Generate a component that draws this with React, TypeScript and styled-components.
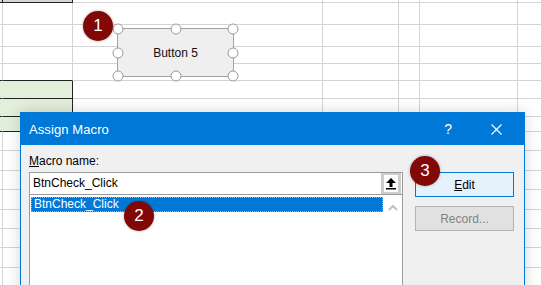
import React from "react";
import styled, { createGlobalStyle, css } from "styled-components";

const GlobalStyle = createGlobalStyle`
  html, body {
    margin: 0;
    padding: 0;
    background: #ffffff;
  }
  body {
    font-family: "Liberation Sans", Arial, sans-serif;
    overflow: hidden;
  }
`;

// sheet layout, taken from the row/column lines in the screenshot
const COLS = [3, 70, 250, 76, 21, 98, 24];
const ROWS = [3, 22, 22, 17, 17, 18, 18, 15, 19, 20, 19, 20, 19, 19, 20, 20];
const GREEN_ROWS = [5, 6, 7];

type CellKind = "plain" | "green" | "greenEdge" | "head" | "aboveGreen";

const cellKind = (row: number, col: number): CellKind => {
  if (row === 0 && col < 2) return "head";
  if (row === GREEN_ROWS[0] - 1 && col < 2) return "aboveGreen";
  if (GREEN_ROWS.includes(row) && col === 0) return "greenEdge";
  if (GREEN_ROWS.includes(row) && col === 1) return "green";
  return "plain";
};

//******** Components ********//

const Badge = ({ n, x, y }: { n: number; x: number; y: number }) => (
  <SBadge $x={x} $y={y}>
    {n}
  </SBadge>
);

const ButtonShape = () => (
  <ShapeBox>
    Button 5
    {[
      [0, 0],
      [50, 0],
      [100, 0],
      [0, 50],
      [100, 50],
      [0, 100],
      [50, 100],
      [100, 100],
    ].map(([hx, hy]) => (
      <Handle key={`${hx}-${hy}`} $x={hx} $y={hy} />
    ))}
  </ShapeBox>
);

const UploadIcon = () => (
  <svg width="12" height="13" viewBox="0 0 12 13">
    <path d="M6 1 L11 6 L7.5 6 L7.5 10 L4.5 10 L4.5 6 L1 6 Z" fill="#000" />
    <rect x="1" y="11" width="10" height="1.5" fill="#000" />
  </svg>
);

const ChevronUp = () => (
  <svg width="10" height="7" viewBox="0 0 10 7">
    <path d="M1 6 L5 2 L9 6" fill="none" stroke="#c2c2c2" strokeWidth="2" />
  </svg>
);

const CloseIcon = () => (
  <svg width="11" height="11" viewBox="0 0 11 11">
    <path d="M0.5 0.5 L10.5 10.5 M10.5 0.5 L0.5 10.5" stroke="#fff" strokeWidth="1.1" />
  </svg>
);

const AssignMacroDialog = () => (
  <Dialog>
    <TitleBar>
      <Title>Assign Macro</Title>
      <TitleButtons>
        <HelpMark>?</HelpMark>
        <CloseIcon />
      </TitleButtons>
    </TitleBar>
    <DialogBody>
      <MainColumn>
        <Label>
          <u>M</u>acro name:
        </Label>
        <NameField>
          <NameText>BtnCheck_Click</NameText>
          <UploadButton>
            <UploadInner>
              <UploadIcon />
            </UploadInner>
          </UploadButton>
        </NameField>
        <MacroList>
          <ListRows>
            <ListRow $selected>BtnCheck_Click</ListRow>
          </ListRows>
          <ScrollTrack>
            <ChevronUp />
          </ScrollTrack>
        </MacroList>
      </MainColumn>
      <SideColumn>
        <DialogButton $variant="focused">
          <u>E</u>dit
        </DialogButton>
        <DialogButton $variant="disabled">Record...</DialogButton>
      </SideColumn>
    </DialogBody>
  </Dialog>
);

export default function App() {
  return (
    <Page>
      <GlobalStyle />
      <Sheet>
        {ROWS.map((_, r) =>
          COLS.map((_, c) => <Cell key={`${r}-${c}`} $kind={cellKind(r, c)} />)
        )}
      </Sheet>
      <ButtonShape />
      <AssignMacroDialog />
      <Badge n={1} x={98} y={26} />
      <Badge n={2} x={139} y={216} />
      <Badge n={3} x={425} y={171} />
    </Page>
  );
}

//******** Styles ********//

const Page = styled.div`
  position: relative;
  width: 542px;
  height: 285px;
  overflow: hidden;
  background: #ffffff;
`;

const Sheet = styled.div`
  display: grid;
  grid-template-columns: ${COLS.map((w) => `${w}px`).join(" ")};
  grid-template-rows: ${ROWS.map((h) => `${h}px`).join(" ")};
`;

const Cell = styled.div<{ $kind: CellKind }>`
  box-sizing: border-box;
  border-right: 1px solid #d4d4d4;
  border-bottom: 1px solid #d4d4d4;

  ${({ $kind }) =>
    $kind === "head" &&
    css`
      background: #d6d6d6;
      border-color: #222;
    `}
  ${({ $kind }) =>
    $kind === "aboveGreen" &&
    css`
      border-bottom-color: #222;
    `}
  ${({ $kind }) =>
    $kind === "green" &&
    css`
      background: #e2efda;
      border-color: #222;
    `}
  ${({ $kind }) =>
    $kind === "greenEdge" &&
    css`
      background: #e2efda;
      border-right-color: #e2efda;
      border-bottom-color: #222;
    `}
`;

const ShapeBox = styled.div`
  position: absolute;
  left: 117px;
  top: 28px;
  width: 117px;
  height: 49px;
  box-sizing: border-box;
  border: 1.5px solid #a3a3a3;
  background: #efefef;
  display: flex;
  align-items: center;
  justify-content: center;
  font-size: 12px;
  color: #111;
`;

const Handle = styled.span<{ $x: number; $y: number }>`
  position: absolute;
  left: ${({ $x }) => $x}%;
  top: ${({ $y }) => $y}%;
  width: 9px;
  height: 9px;
  border-radius: 50%;
  border: 1.5px solid #9a9a9a;
  background: #ffffff;
  transform: translate(-50%, -50%);
`;

const SBadge = styled.div<{ $x: number; $y: number }>`
  position: absolute;
  left: ${({ $x }) => $x - 15}px;
  top: ${({ $y }) => $y - 15}px;
  width: 30px;
  height: 30px;
  border-radius: 50%;
  background: #820808;
  box-shadow: 0 0 3px rgba(0, 0, 0, 0.35);
  color: #ffffff;
  font-size: 17px;
  display: flex;
  align-items: center;
  justify-content: center;
`;

const Dialog = styled.div`
  position: absolute;
  left: 20px;
  top: 112px;
  width: 505px;
  height: 200px;
  box-sizing: border-box;
  border: 1px solid #0078d7;
  background: #f0f0f0;
  box-shadow: 0 0 14px rgba(0, 0, 0, 0.16);
  display: flex;
  flex-direction: column;
`;

const TitleBar = styled.div`
  height: 32px;
  flex-shrink: 0;
  background: #0078d7;
  display: flex;
  align-items: center;
  justify-content: space-between;
  padding: 0 22px 0 8px;
  color: #ffffff;
`;

const Title = styled.span`
  font-size: 13px;
  letter-spacing: 0.1px;
`;

const TitleButtons = styled.div`
  display: flex;
  align-items: center;
  gap: 39px;
`;

const HelpMark = styled.span`
  font-size: 14px;
  line-height: 14px;
`;

const DialogBody = styled.div`
  display: flex;
  gap: 12px;
  padding: 8px 0 0 8px;
`;

const MainColumn = styled.div`
  width: 374px;
  display: flex;
  flex-direction: column;
`;

const Label = styled.div`
  font-size: 12px;
  line-height: 16px;
  height: 16px;
  margin-bottom: 3px;
  color: #000;
`;

const NameField = styled.div`
  height: 23px;
  box-sizing: border-box;
  border: 1px solid #9a9a9a;
  background: #ffffff;
  display: flex;
  align-items: stretch;
`;

const NameText = styled.div`
  flex: 1;
  font-size: 12px;
  line-height: 21px;
  padding-left: 3px;
  color: #000;
`;

const UploadButton = styled.div`
  width: 20px;
  box-sizing: border-box;
  padding: 2px 3px;
  margin-right: 1px;
  background: #cdcdcd;
  display: flex;
`;

const UploadInner = styled.div`
  flex: 1;
  background: #ffffff;
  display: flex;
  align-items: center;
  justify-content: center;
`;

const MacroList = styled.div`
  height: 120px;
  box-sizing: border-box;
  border: 1px solid #9a9a9a;
  border-top: none;
  background: #ffffff;
  display: flex;
`;

const ListRows = styled.div`
  flex: 1;
  padding: 2px 0 0 1px;
`;

const ListRow = styled.div<{ $selected?: boolean }>`
  height: 15px;
  box-sizing: border-box;
  font-size: 12px;
  line-height: 13px;
  padding-left: 2px;
  color: ${({ $selected }) => ($selected ? "#ffffff" : "#000")};
  background: ${({ $selected }) => ($selected ? "#0078d7" : "transparent")};
  border: 1px dotted ${({ $selected }) => ($selected ? "#f0a040" : "transparent")};
`;

const ScrollTrack = styled.div`
  width: 19px;
  display: flex;
  justify-content: center;
  padding-top: 9px;
  align-items: flex-start;
`;

const SideColumn = styled.div`
  width: 99px;
  padding-top: 19px;
  display: flex;
  flex-direction: column;
  gap: 9px;
`;

const DialogButton = styled.div<{ $variant: "focused" | "disabled" }>`
  height: 25px;
  box-sizing: border-box;
  display: flex;
  align-items: center;
  justify-content: center;
  font-size: 12px;

  ${({ $variant }) =>
    $variant === "focused"
      ? css`
          background: #e5f1fb;
          border: 1px solid #0078d7;
          color: #000;
        `
      : css`
          background: #e1e1e1;
          border: 1px solid #b4b4b4;
          color: #838383;
        `}
`;
